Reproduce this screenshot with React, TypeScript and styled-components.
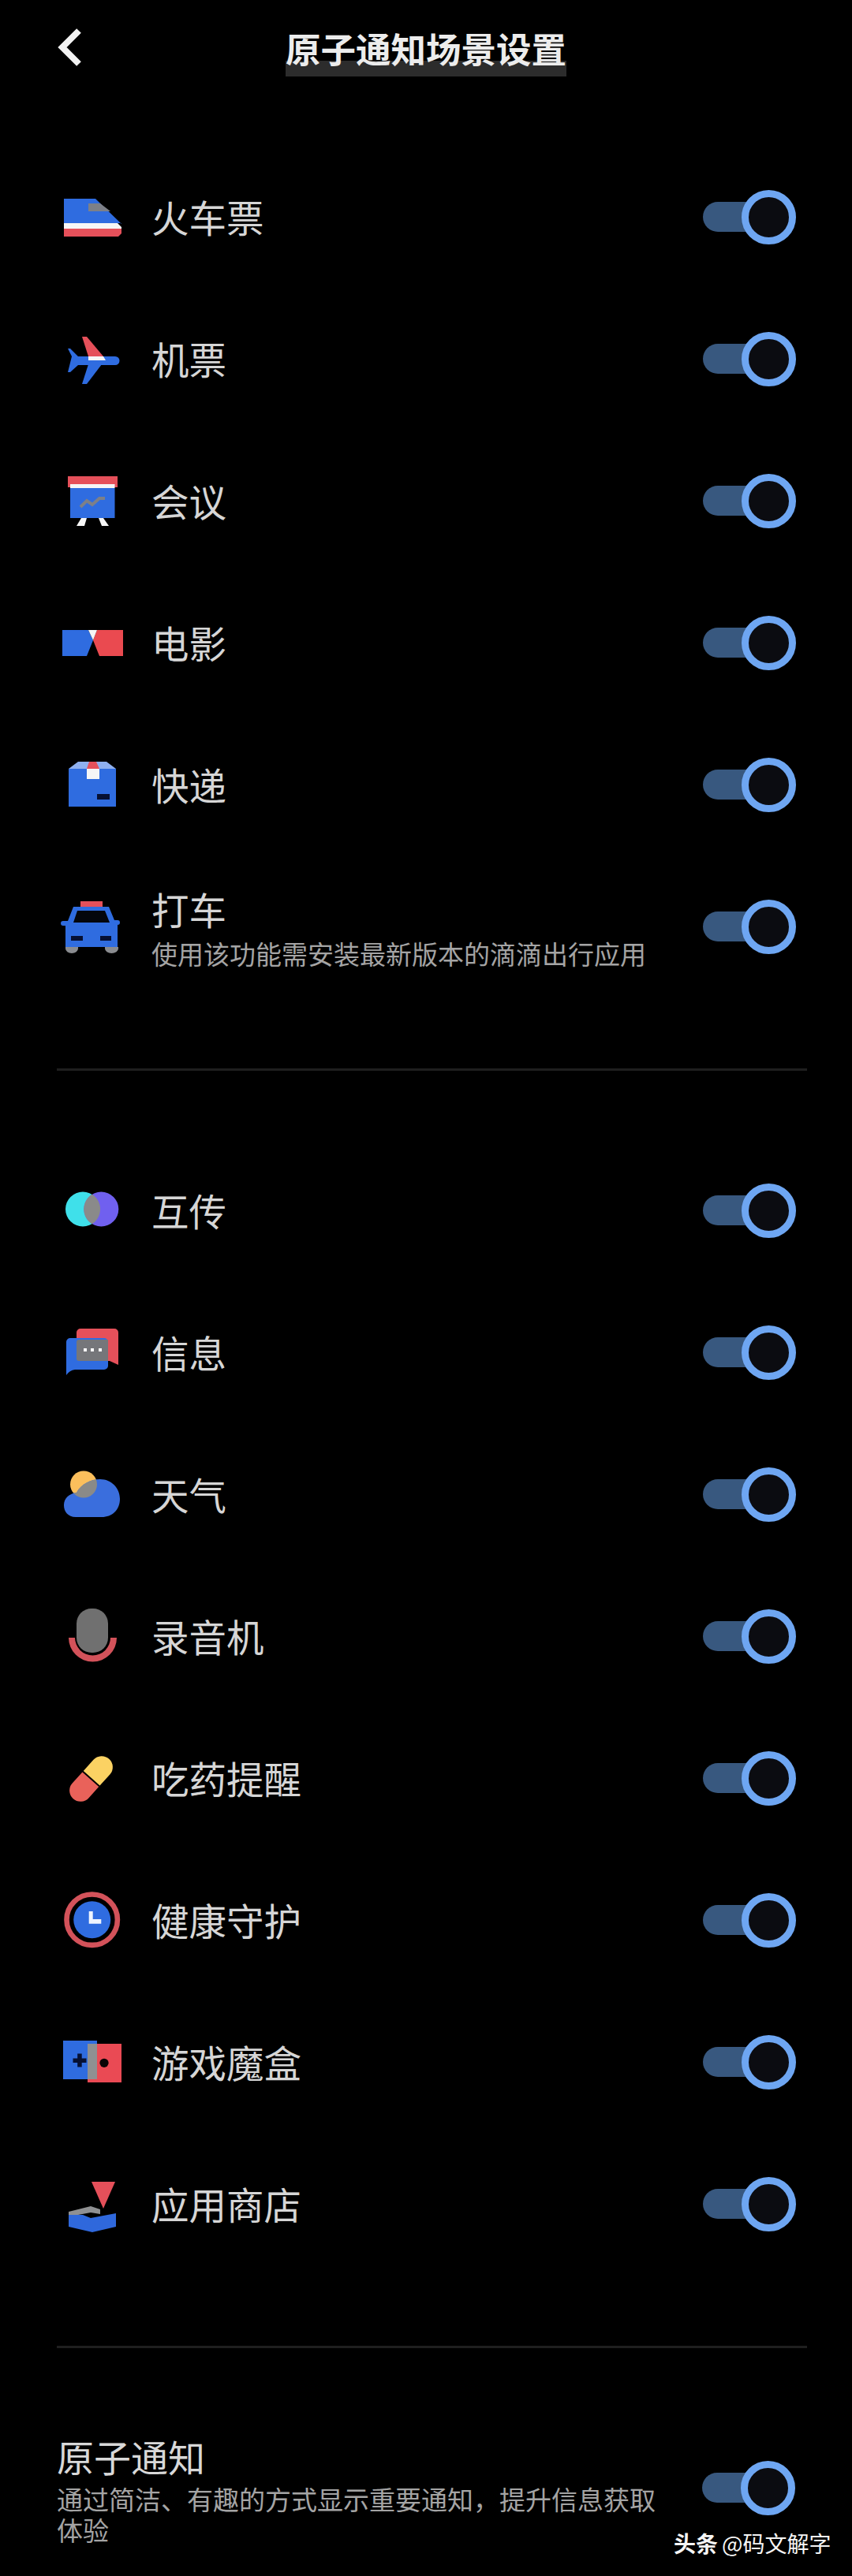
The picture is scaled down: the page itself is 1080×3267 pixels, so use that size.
import React from "react";
import styled, { createGlobalStyle } from "styled-components";

const Global = createGlobalStyle`
  html, body { margin: 0; padding: 0; background: #000; }
  body { font-family: "Noto Sans CJK SC", "Noto Sans", sans-serif; }
`;

const Page = styled.div`
  position: relative;
  width: 1080px;
  height: 3267px;
  overflow: hidden;
  background: #000;
`;

const Header = styled.header`
  display: grid;
  grid-template-columns: 1fr auto 1fr;
  align-items: start;
  height: 185px;
  padding: 35px 72px 0 72px;
  box-sizing: border-box;
`;

const BackIcon = styled.svg`
  display: block;
  width: 32px;
  height: 50px;
`;

const Title = styled.h1`
  position: relative;
  isolation: isolate;
  margin: -1px 0 0;
  font-size: 44.5px;
  line-height: 54px;
  font-weight: 700;
  color: #ececec;
  white-space: nowrap;
  &::after {
    content: "";
    position: absolute;
    z-index: -1;
    left: 0;
    right: 0;
    top: 43px;
    height: 20px;
    background: #2c2c2c;
  }
`;

const Section = styled.section`
  display: flex;
  flex-direction: column;
`;

const Row = styled.div`
  display: flex;
  align-items: center;
  height: 180px;
  padding: 0 71px 0 77px;
  box-sizing: border-box;
`;

const IconSvg = styled.svg`
  flex: none;
  display: block;
  width: 80px;
  height: 80px;
  margin-right: 35px;
`;

const RowText = styled.div`
  flex: 1;
  min-width: 0;
  display: flex;
  flex-direction: column;
`;

const Label = styled.div`
  font-size: 47.5px;
  line-height: 56px;
  color: #d6d6d6;
`;

const Sub = styled.div`
  font-size: 33px;
  line-height: 40px;
  margin: 8px 0 -4px;
  color: #a4a4a4;
`;

const Toggle = styled.div`
  flex: none;
  display: flex;
  align-items: center;
`;

const Track = styled.div`
  width: 60px;
  height: 38px;
  border-radius: 19px 0 0 19px;
  background: #38587f;
`;

const Knob = styled.div`
  width: 69px;
  height: 69px;
  box-sizing: border-box;
  margin-left: -11px;
  border-radius: 50%;
  border: 9px solid #6ea6f2;
  background: #0b0c11;
`;

const Divider = styled.hr<{ $before: number; $after: number }>`
  height: 3px;
  border: 0;
  background: #1f1f1f;
  margin: ${(p) => p.$before}px 57px ${(p) => p.$after}px 72px;
`;

const MasterRow = styled.div`
  display: flex;
  align-items: center;
  padding: 106px 71px 0 72px;
`;

const MasterText = styled.div`
  flex: none;
  width: 770px;
  margin-right: 48px;
  display: flex;
  flex-direction: column;
`;

const MasterLabel = styled.div`
  font-size: 47px;
  line-height: 62px;
  color: #d8d8d8;
`;

const MasterSub = styled.div`
  font-size: 33px;
  line-height: 39px;
  margin: 4px 0 -2px;
  color: #a4a4a4;
`;

const Watermark = styled.div`
  position: absolute;
  left: 854px;
  top: 3205px;
  font-size: 28px;
  line-height: 40px;
  color: #f5f5f5;
  white-space: nowrap;
  b { font-weight: 700; margin-right: 5px; }
`;

const BLUE = "#2f6ce0";
const RED = "#e5505a";
const GREY = "#7d8088";
const WHITE = "#f6f6f6";
const NAVY = "#061033";

const Train = () => (
  <IconSvg viewBox="0 0 80 80">
    <polygon points="4,17 44,17 77,49 77,48 4,48" fill={BLUE} />
    <polygon points="35,23 50,23 63,33 35,33" fill={GREY} />
    <polygon points="4,48 72,48 77,53 77,55 4,55" fill={WHITE} />
    <polygon points="4,55 77,55 77,61 73,65 4,65" fill={RED} />
  </IconSvg>
);

const Plane = () => (
  <IconSvg viewBox="0 0 80 80">
    <path d="M14 37 L9 27 L12 27 L22 37 H69 a5.5 5.5 0 0 1 0 11 H22 L12 57 L9 57 Z" fill={BLUE} />
    <polygon points="35,47 52,47 33,72 27,72" fill={BLUE} />
    <polygon points="27,12 33,12 54,37 35,37" fill={RED} />
    <polygon points="35,37 54,37 57,42 35,42" fill={WHITE} />
  </IconSvg>
);

const Meeting = () => (
  <IconSvg viewBox="0 0 80 80">
    <rect x="12" y="24" width="56.5" height="38" fill={BLUE} />
    <rect x="9" y="9" width="63" height="14" fill={RED} />
    <rect x="12" y="19" width="56.5" height="5" fill={WHITE} />
    <polyline points="25,48 33,40 40,45 49,37 56,37" fill="none" stroke={GREY} strokeWidth="4" />
    <polygon points="26,62 33,62 30,72 20,72" fill={WHITE} />
    <polygon points="48,62 54,62 61,72 52,72" fill={WHITE} />
  </IconSvg>
);

const Movie = () => (
  <IconSvg viewBox="0 0 80 80">
    <polygon points="2,24 35,24 41,37 33,57 2,57" fill={BLUE} />
    <polygon points="79,24 46,24 41,37 49,57 79,57" fill="#ea4a50" />
    <polygon points="35,24 46,24 41,37" fill={WHITE} />
  </IconSvg>
);

const Parcel = () => (
  <IconSvg viewBox="0 0 80 80">
    <polygon points="10,20 22,11 58,11 70,20" fill="#8fb0ef" />
    <rect x="10" y="20" width="60" height="48" fill={BLUE} />
    <polygon points="36,11 45,11 49,20 33,20" fill={RED} />
    <rect x="33" y="20" width="16" height="13" fill={WHITE} />
    <rect x="46" y="52" width="16" height="7" fill={NAVY} />
  </IconSvg>
);

const Taxi = () => (
  <IconSvg viewBox="0 0 80 80">
    <rect x="25" y="8" width="28" height="9" fill={RED} />
    <path d="M6 66 H22 V68 a8 6 0 0 1 -16 0 Z M56 66 H73 V68 a8.5 6 0 0 1 -17 0 Z" fill="#8a8c90" />
    <path d="M16 15 H61 L68 32 H72 a2.5 2.5 0 0 1 0 6 V66 H6 V39 H3 a2.5 2.5 0 0 1 0 -6 H9 Z" fill={BLUE} />
    <polygon points="21,20 56,20 62,35 16,35" fill="#04060c" />
    <rect x="13" y="52" width="15" height="6" fill={NAVY} />
    <rect x="50" y="52" width="14" height="6" fill={NAVY} />
  </IconSvg>
);

const Transfer = () => (
  <IconSvg viewBox="0 0 80 80">
    <circle cx="28" cy="38.5" r="22" fill="#3fe0ea" />
    <circle cx="51.3" cy="38.5" r="22" fill="#7060ef" />
    <path d="M39.65 19.8 A22 22 0 0 1 39.65 57.2 A22 22 0 0 1 39.65 19.8 Z" fill="#8a8a8a" />
  </IconSvg>
);

const Message = () => (
  <IconSvg viewBox="0 0 80 80">
    <path d="M25 10 H68 a5 5 0 0 1 5 5 V56 L62 51 H20 V15 a5 5 0 0 1 5 -5 Z" fill={RED} />
    <path d="M12 22 H55 a5 5 0 0 1 5 5 V57 a5 5 0 0 1 -5 5 H18 Q11 63 7 69 V27 a5 5 0 0 1 5 -5 Z" fill={BLUE} />
    <path d="M20 27 a3 3 0 0 1 3 -3 H60 V51 H23 a3 3 0 0 1 -3 -3 Z" fill="#75767a" />
    <rect x="29" y="35" width="4" height="4" fill="#fff" />
    <rect x="38" y="35" width="4" height="4" fill="#fff" />
    <rect x="48" y="35" width="4" height="4" fill="#fff" />
  </IconSvg>
);

const CLOUD = "M19 69 C9 69 4 62 4 54 C4 45 11 39 20 38 C26 27 38 21 50 21 C64 21 75 32 75 46 C75 60 65 69 52 69 Z";

const Weather = () => (
  <IconSvg viewBox="0 0 80 80">
    <defs>
      <clipPath id="cloud-clip">
        <path d={CLOUD} />
      </clipPath>
    </defs>
    <circle cx="29" cy="27.5" r="17" fill="#fbbf5c" />
    <path d={CLOUD} fill="#3a6edd" />
    <circle cx="29" cy="27.5" r="17" fill="#8a8a88" clipPath="url(#cloud-clip)" />
  </IconSvg>
);

const Recorder = () => (
  <IconSvg viewBox="0 0 80 80">
    <path d="M10 42 H18 A22.5 22.5 0 0 0 63 42 H71 A30.5 30.5 0 0 1 10 42 Z" fill="#d3525a" />
    <rect x="20" y="5" width="40" height="56" rx="19" fill="#707070" />
  </IconSvg>
);

const Pill = () => (
  <IconSvg viewBox="0 0 80 80">
    <g transform="rotate(-48 38.5 41)">
      <path d="M37.5 27 H18.5 a14 14 0 0 0 0 28 H37.5 Z" fill="#e9625a" />
      <path d="M39.5 27 H58.5 a14 14 0 0 1 0 28 H39.5 Z" fill="#fbd263" />
    </g>
  </IconSvg>
);

const Health = () => (
  <IconSvg viewBox="0 0 80 80">
    <circle cx="39.7" cy="39.7" r="32.2" fill="none" stroke="#d3525a" strokeWidth="6.6" />
    <circle cx="39.7" cy="39.7" r="23.5" fill={BLUE} />
    <polygon points="35.7,29 40.7,29 40.7,39 51.3,39 51.3,44.7 35.7,44.7" fill="#eef4ff" />
  </IconSvg>
);

const Game = () => (
  <IconSvg viewBox="0 0 80 80">
    <rect x="3" y="13" width="43" height="49" fill={BLUE} />
    <rect x="34" y="17" width="43" height="49" fill="#ea4a54" />
    <rect x="34" y="17" width="12" height="45" fill="#8f9092" />
    <rect x="15.5" y="35.5" width="17" height="5.5" fill={NAVY} />
    <rect x="21.2" y="29.5" width="5.5" height="17" fill={NAVY} />
    <circle cx="55" cy="41.3" r="5.6" fill="#0a0406" />
  </IconSvg>
);

const Store = () => (
  <IconSvg viewBox="0 0 80 80">
    <polygon points="39,12 69,12 54,46" fill={RED} />
    <polygon points="10,50 38,43 50,47 50,53 38,51 22,54 10,54" fill="#8f9092" />
    <polygon points="10,54 28,54 38,58 70,52 70,69 40,76 10,69" fill="#2f68dc" />
  </IconSvg>
);

type Item = { icon: React.ComponentType; label: string; sub?: string };

const transport: Item[] = [
  { icon: Train, label: "火车票" },
  { icon: Plane, label: "机票" },
  { icon: Meeting, label: "会议" },
  { icon: Movie, label: "电影" },
  { icon: Parcel, label: "快递" },
  { icon: Taxi, label: "打车", sub: "使用该功能需安装最新版本的滴滴出行应用" },
];

const system: Item[] = [
  { icon: Transfer, label: "互传" },
  { icon: Message, label: "信息" },
  { icon: Weather, label: "天气" },
  { icon: Recorder, label: "录音机" },
  { icon: Pill, label: "吃药提醒" },
  { icon: Health, label: "健康守护" },
  { icon: Game, label: "游戏魔盒" },
  { icon: Store, label: "应用商店" },
];

const Switch = () => (
  <Toggle>
    <Track />
    <Knob />
  </Toggle>
);

const Rows = ({ items }: { items: Item[] }) => (
  <Section>
    {items.map(({ icon: Icon, label, sub }) => (
      <Row key={label}>
        <Icon />
        <RowText>
          <Label>{label}</Label>
          {sub && <Sub>{sub}</Sub>}
        </RowText>
        <Switch />
      </Row>
    ))}
  </Section>
);

export default function App() {
  return (
    <Page>
      <Global />
      <Header>
        <BackIcon viewBox="0 0 32 50">
          <polyline points="28,4 7,25 28,46" fill="none" stroke="#f2f2f2" strokeWidth="8" />
        </BackIcon>
        <Title>原子通知场景设置</Title>
      </Header>
      <Rows items={transport} />
      <Divider $before={90} $after={87} />
      <Rows items={system} />
      <Divider $before={90} $after={0} />
      <MasterRow>
        <MasterText>
          <MasterLabel>原子通知</MasterLabel>
          <MasterSub>通过简洁、有趣的方式显示重要通知，提升信息获取体验</MasterSub>
        </MasterText>
        <Switch />
      </MasterRow>
      <Watermark>
        <b>头条</b>@码文解字
      </Watermark>
    </Page>
  );
}
